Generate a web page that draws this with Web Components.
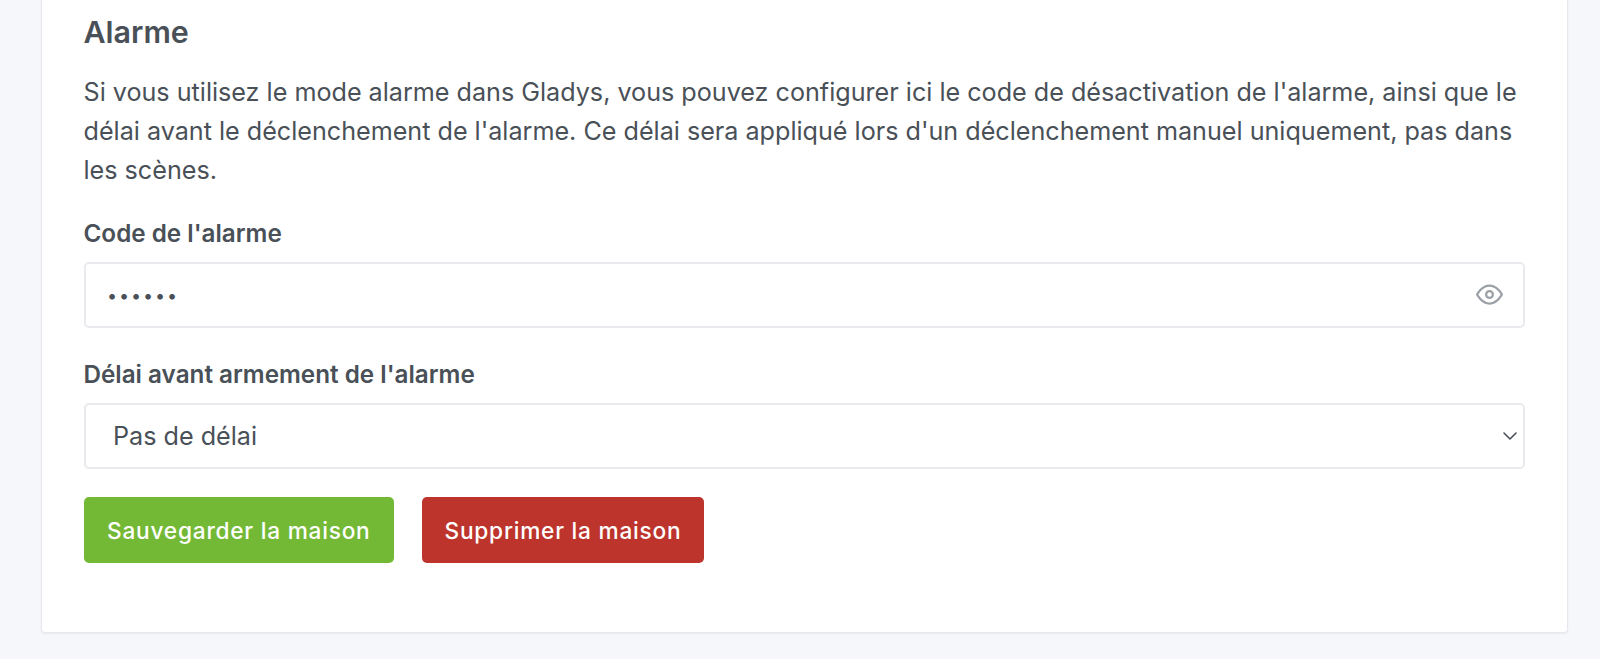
<!DOCTYPE html>
<html lang="fr">
<head>
<meta charset="utf-8">
<title>Alarme</title>
<style>
    html, body { margin: 0; height: 100%; overflow: hidden; }
    body { background: #f5f7fb; font-family: Inter, "Liberation Sans", sans-serif; color: #495057; }
</style>
</head>
<body>
<house-card>
    <h-title>Alarme</h-title>
    <h-text>Si vous utilisez le mode alarme dans Gladys, vous pouvez configurer ici le code de désactivation de l'alarme, ainsi que le délai avant le déclenchement de l'alarme. Ce délai sera appliqué lors d'un déclenchement manuel uniquement, pas dans les scènes.</h-text>
    <password-field label="Code de l'alarme" value="••••••"></password-field>
    <select-field label="Délai avant armement de l'alarme" value="Pas de délai"></select-field>
    <div style="display: flex; gap: 28px;">
        <h-button color="#74b936">Sauvegarder la maison</h-button>
        <h-button color="#bd342c">Supprimer la maison</h-button>
    </div>
</house-card>

<script>
    // The white card, cut by the top of the window.
    class HouseCard extends HTMLElement {
        constructor() {
            super()
            this.attachShadow({ mode: 'open' });
            this.shadowRoot.innerHTML = `
            <style>
                :host {
                    display: block;
                    box-sizing: border-box;
                    margin: -4px 32px 0 41px;
                    height: 637px;
                    padding: 0 42px;
                    background-color: #fff;
                    border: 1px solid #e6e8ed;
                    border-top: 0;
                    border-radius: 0 0 4px 4px;
                    box-shadow: 0 1px 2px rgba(0, 0, 0, .05);
                }
            </style>
            <slot></slot>
            `
        }
    }

    class HTitle extends HTMLElement {
        constructor() {
            super()
            this.attachShadow({ mode: 'open' });
            this.shadowRoot.innerHTML = `
            <style>
                :host {
                    display: block;
                    padding-top: 19px;
                    margin-left: -0.5px;
                    font-size: 30.4px;
                    font-weight: 600;
                    line-height: 35px;
                    color: #495057;
                }
            </style>
            <slot></slot>
            `
        }
    }

    class HText extends HTMLElement {
        constructor() {
            super()
            this.attachShadow({ mode: 'open' });
            this.shadowRoot.innerHTML = `
            <style>
                :host {
                    display: block;
                    margin: 22.5px 0 0 -0.5px;
                    font-size: 25.15px;
                    line-height: 39.4px;
                    color: #495057;
                }
            </style>
            <slot></slot>
            `
        }
    }

    // Shared markup of a labelled control box.
    const fieldStyle = `
        :host { display: block; }
        label {
            display: block;
            margin-left: -0.5px;
            font-size: 24.25px;
            font-weight: 600;
            line-height: 28px;
            margin-bottom: 15px;
            color: #495057;
        }
        .box {
            box-sizing: border-box;
            display: flex;
            align-items: center;
            height: 66px;
            background-color: #fff;
            border: 2px solid #e8eaed;
            border-radius: 5px;
        }
    `

    class PasswordField extends HTMLElement {
        constructor() {
            super()
            this.attachShadow({ mode: 'open' });
            this.shadowRoot.innerHTML = `
            <style>
                ${fieldStyle}
                :host { margin-top: 29px; }
                label { margin-bottom: 14px; }
                .value { flex-grow: 1; padding-left: 21px; font-size: 18px; letter-spacing: 1.9px; position: relative; top: 1px; }
                svg { width: 27px; height: 27px; margin-right: 20px; }
            </style>
            <label>${this.getAttribute('label')}</label>
            <div class="box">
                <span class="value">${this.getAttribute('value')}</span>
                <svg viewBox="0 0 24 24" fill="none" stroke="#9aa0a6" stroke-width="2" stroke-linecap="round" stroke-linejoin="round">
                    <path d="M1 12s4-8 11-8 11 8 11 8-4 8-11 8-11-8-11-8z"></path>
                    <circle cx="12" cy="12" r="3"></circle>
                </svg>
            </div>
            `
        }
    }

    class SelectField extends HTMLElement {
        constructor() {
            super()
            this.attachShadow({ mode: 'open' });
            this.shadowRoot.innerHTML = `
            <style>
                ${fieldStyle}
                :host { margin-top: 33.5px; }
                label { margin-bottom: 14px; }
                .value { flex-grow: 1; padding-left: 27px; font-size: 25.15px; }
                svg { width: 16px; height: 10px; margin-right: 5px; }
            </style>
            <label>${this.getAttribute('label')}</label>
            <div class="box">
                <span class="value">${this.getAttribute('value')}</span>
                <svg viewBox="0 0 16 10" fill="none" stroke="#495057" stroke-width="1.6" stroke-linecap="round" stroke-linejoin="round">
                    <path d="M2 2l6 6 6-6"></path>
                </svg>
            </div>
            `
        }
    }

    class HButton extends HTMLElement {
        constructor() {
            super()
            this.attachShadow({ mode: 'open' });
            this.shadowRoot.innerHTML = `
            <style>
                :host {
                    display: flex;
                    align-items: center;
                    height: 66px;
                    padding: 0 23px;
                    margin-top: 28px;
                    border-radius: 5px;
                    background-color: ${this.getAttribute('color')};
                    color: #fff;
                    font-size: 22.7px;
                    font-weight: 500;
                    letter-spacing: .76px;
                }
            </style>
            <slot></slot>
            `
        }
    }

    customElements.define('house-card', HouseCard)
    customElements.define('h-title', HTitle)
    customElements.define('h-text', HText)
    customElements.define('password-field', PasswordField)
    customElements.define('select-field', SelectField)
    customElements.define('h-button', HButton)
</script>
</body>
</html>
